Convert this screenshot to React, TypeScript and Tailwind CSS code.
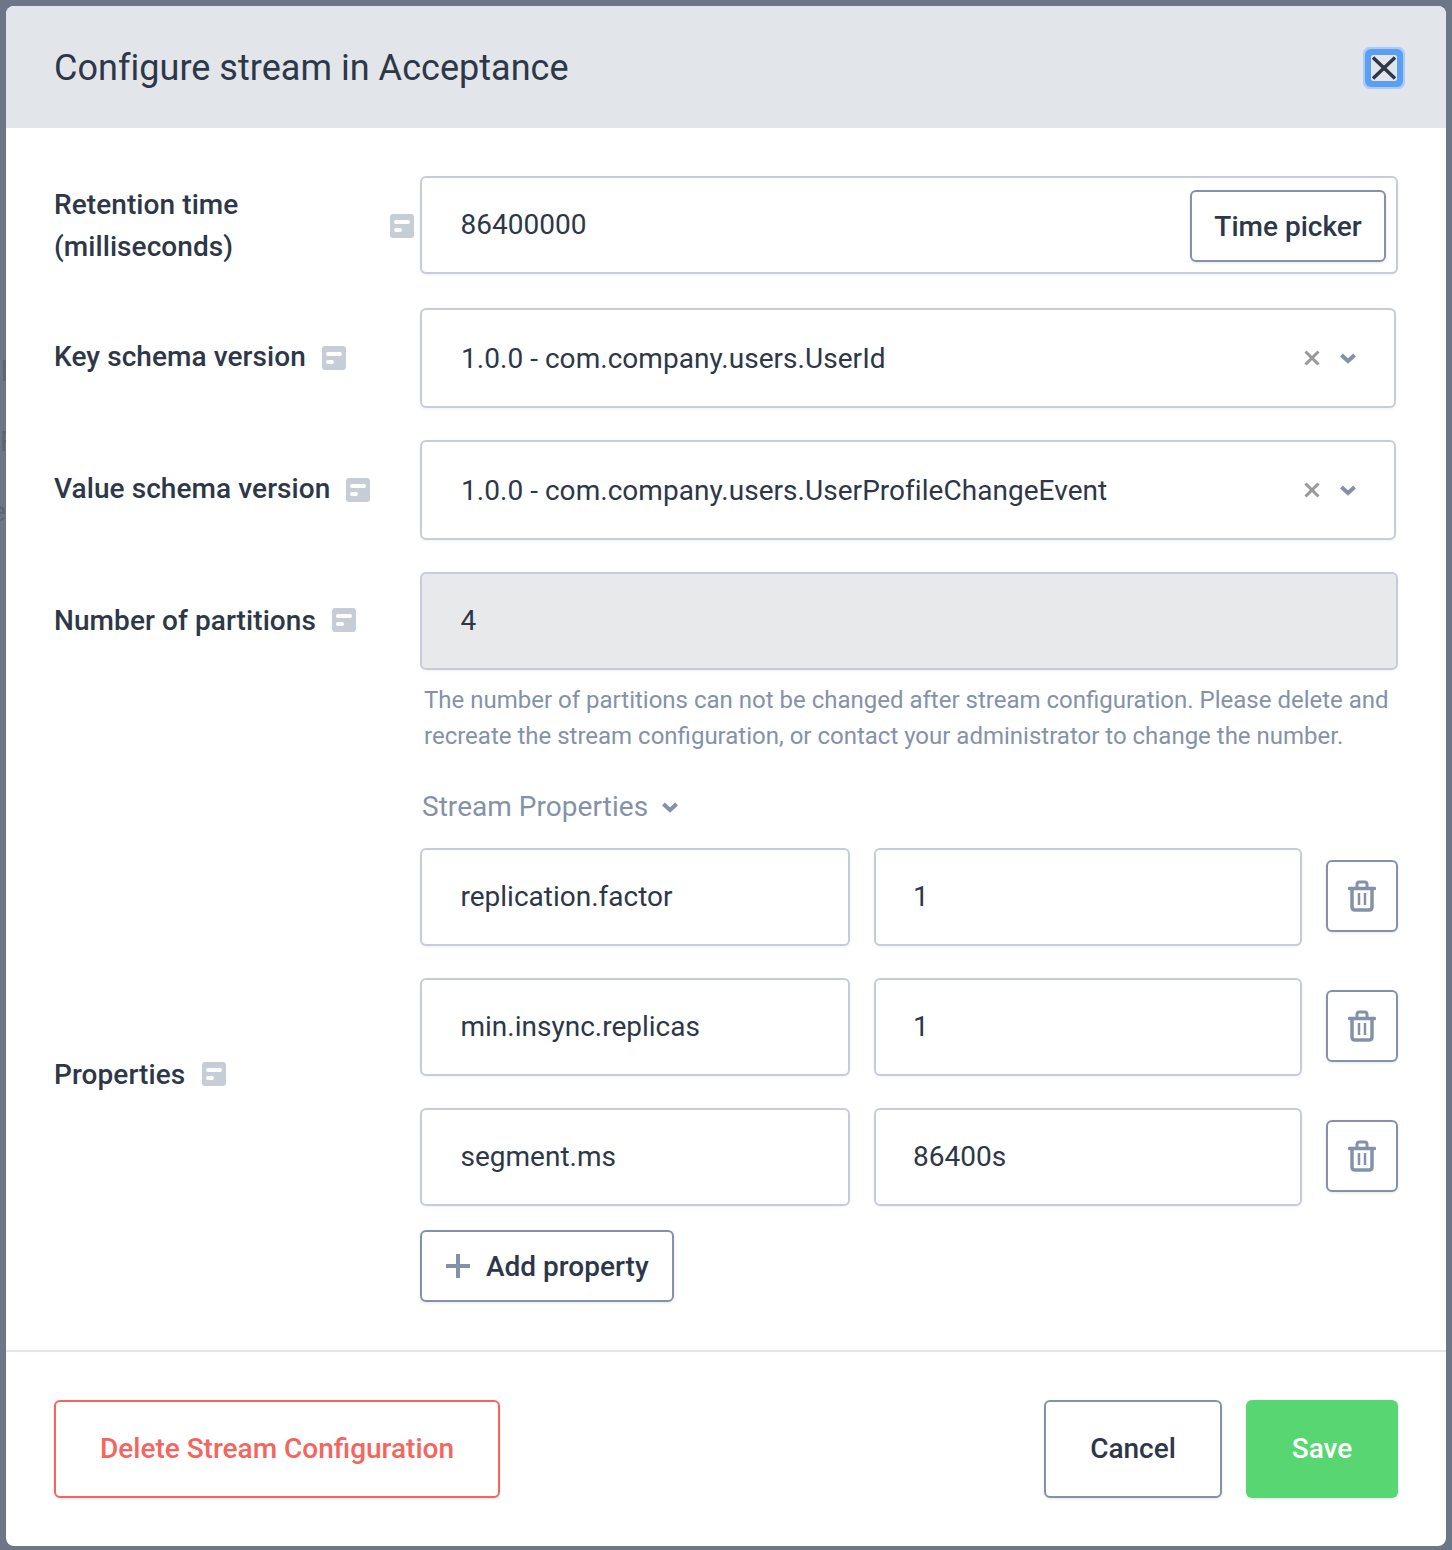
const NoteIcon = () => (
  <svg width="24" height="24" viewBox="0 0 24 24" className="shrink-0">
    <rect width="24" height="24" rx="3" fill="#c6cdd6" />
    <rect x="4" y="6" width="16" height="4" rx="2" fill="#fff" />
    <rect x="4" y="14" width="8" height="4" rx="2" fill="#fff" />
  </svg>
);

const TrashIcon = () => (
  <svg width="28" height="32" viewBox="0 0 28 32" fill="none" stroke="#8492a9" strokeWidth="3.500">
    <path d="M1.500 8.500h25" strokeLinecap="round" />
    <path d="M9 8V4.500Q9 2 11.500 2h5Q19 2 19 4.500V8" strokeWidth="3" />
    <path d="M4 9v18Q4 30 7 30h14q3 0 3-3V9" />
    <path d="M11 13v12M17 13v12" strokeWidth="2.500" />
  </svg>
);

const Chevron = () => (
  <svg width="16" height="11" viewBox="0 0 16 11" fill="none" stroke="#8492a9" strokeWidth="4">
    <path d="M1.400 2l6.600 6L14.600 2" />
  </svg>
);

type LabelProps = { text: string; className?: string; textClass?: string; iconClass?: string };

const FieldLabel = ({ text, className = '', textClass = '', iconClass = 'ml-4' }: LabelProps) => (
  <div className={`flex w-[366px] shrink-0 items-center ${className}`}>
    <span className={`max-w-[320px] text-[28px] leading-[42px] font-medium tracking-[0.08px] text-[#2d3748] ${textClass}`}>{text}</span>
    <span className={iconClass}>
      <NoteIcon />
    </span>
  </div>
);

const TextInput = ({ value, className = '' }: { value: string; className?: string }) => (
  <input
    readOnly
    value={value}
    className={`h-[98px] rounded-md border-2 border-[#c6ccd9] bg-white pb-[2px] text-[28px] text-[#2d3748] shadow-[0_1px_3px_rgba(0,0,0,0.06)] outline-none ${className}`}
  />
);

const SelectBox = ({ value }: { value: string }) => (
  <div className="flex h-[100px] flex-1 items-center rounded-md border-2 border-[#c6ccd9] bg-white pr-[38px] pl-[39px] shadow-[0_1px_3px_rgba(0,0,0,0.06)]">
    <span className="flex-1 pt-[2px] text-[28px] tracking-[0.04px] text-[#2d3748]">{value}</span>
    <svg width="16" height="16" viewBox="0 0 16 16" fill="none" stroke="#999999" strokeWidth="3">
      <path d="M1.500 1.500l13 13M14.500 1.500l-13 13" />
    </svg>
    <span className="ml-5">
      <Chevron />
    </span>
  </div>
);

const PropertyRow = ({ name, value }: { name: string; value: string }) => (
  <div className="flex items-center gap-6">
    <TextInput value={name} className="w-[430px] px-[38.5px]" />
    <TextInput value={value} className="w-[428px] px-[37px]" />
    <button className="mb-[2px] flex h-[72px] w-[72px] items-center justify-center rounded-md border-2 border-[#8492a9] bg-white shadow-[0_1px_3px_rgba(0,0,0,0.1)]">
      <TrashIcon />
    </button>
  </div>
);

const App = () => {
  return (
    <div className="relative h-[1550px] overflow-hidden bg-[#6c7686] p-[6px] font-['Roboto',sans-serif]">
      {/* page behind the modal */}
      <span className="absolute top-[358px] left-[1px] text-[28px] leading-none text-[#5b6577]">l</span>
      <span className="absolute top-[428px] left-[0px] text-[28px] leading-none text-[#5b6577]">F</span>
      <span className="absolute top-[498px] left-[-9px] text-[28px] leading-none text-[#5b6577]">e</span>

      <div className="relative h-[1540px] overflow-hidden rounded-lg bg-white">
        {/* Header */}
        <div className="flex h-[122px] items-center justify-between bg-[#e2e5ea] px-[48px]">
          <h1 className="pt-[2px] text-[36px] font-normal tracking-[0.03px] text-[#2d3748]">Configure stream in Acceptance</h1>
          <button className="mt-[1px] mr-[1px] flex h-[26px] w-[26px] items-center justify-center rounded-[2px] shadow-[0_0_0_6px_#5b9ff2,0_0_0_8px_#a9cbf5]">
            <svg width="26" height="26" viewBox="0 0 26 26" fill="none" stroke="#2d3748" strokeWidth="3.500">
              <path d="M2 2.500l22 21M24 2.500l-22 21" />
            </svg>
          </button>
        </div>

        {/* Body */}
        <div className="px-[48px] pt-[48px]">
          <div className="flex items-center">
            <FieldLabel text="Retention time (milliseconds)" className="pt-[2px]" />
            <div className="relative flex-1">
              <TextInput value="86400000" className="w-full px-[38.5px]" />
              <button className="absolute top-[14px] right-3 h-[72px] w-[196px] rounded-md border-2 border-[#8492a9] bg-white pt-[2px] text-[28px] font-medium text-[#2d3748] shadow-[0_1px_3px_rgba(0,0,0,0.1)]">
                Time picker
              </button>
            </div>
          </div>

          <div className="mt-[34px] flex items-center pr-[2px]">
            <FieldLabel text="Key schema version" textClass="pb-[2px]" />
            <SelectBox value="1.0.0 - com.company.users.UserId" />
          </div>

          <div className="mt-8 flex items-center pr-[2px]">
            <FieldLabel text="Value schema version" textClass="pb-[2px]" />
            <SelectBox value="1.0.0 - com.company.users.UserProfileChangeEvent" />
          </div>

          <div className="mt-8 flex items-center">
            <FieldLabel text="Number of partitions" iconClass="mb-[2px] ml-4" />
            <TextInput value="4" className="flex-1 !bg-[#e8e9eb] px-[38.5px]" />
          </div>

          <p className="mt-3 ml-[370px] text-[24px] leading-[36px] text-[#8492a9]">
            The number of partitions can not be changed after stream configuration. Please delete and recreate the stream configuration, or contact your administrator to change the number.
          </p>

          <div className="mt-[35px] ml-[368px] flex items-center text-[28px] leading-[36px] tracking-[0.04px] text-[#8492a9]">
            Stream Properties
            <span className="ml-[14px]">
              <Chevron />
            </span>
          </div>

          <div className="mt-[23px] flex items-center">
            <FieldLabel text="Properties" iconClass="mb-[2px] ml-[17px]" />
            <div className="flex-1">
              <div className="flex flex-col gap-8">
                <PropertyRow name="replication.factor" value="1" />
                <PropertyRow name="min.insync.replicas" value="1" />
                <PropertyRow name="segment.ms" value="86400s" />
              </div>
              <button className="mt-6 flex h-[72px] w-[254px] items-center rounded-md border-2 border-[#8492a9] bg-white pl-6 text-[28px] font-medium text-[#2d3748] shadow-[0_1px_3px_rgba(0,0,0,0.1)]">
                <svg width="24" height="24" viewBox="0 0 24 24" stroke="#8492a9" strokeWidth="4">
                  <path d="M12 0v24M0 12h24" />
                </svg>
                <span className="ml-4 pt-[2px]">Add property</span>
              </button>
            </div>
          </div>
        </div>

        {/* Footer */}
        <div className="mt-12 flex justify-between border-t-2 border-[#e2e5ec] px-[48px] pt-12">
          <button className="h-[98px] w-[446px] rounded-md border-2 border-[#f5655d] bg-white text-[28px] font-medium text-[#f5655d] shadow-[0_1px_3px_rgba(0,0,0,0.1)]">
            Delete Stream Configuration
          </button>
          <div className="flex gap-6">
            <button className="h-[98px] w-[178px] rounded-md border-2 border-[#8492a9] bg-white text-[28px] font-medium text-[#2d3748] shadow-[0_1px_3px_rgba(0,0,0,0.1)]">
              Cancel
            </button>
            <button className="h-[98px] w-[152px] rounded-md bg-[#58d672] text-[28px] font-medium text-white shadow-[0_1px_3px_rgba(0,0,0,0.1)]">
              Save
            </button>
          </div>
        </div>
      </div>
    </div>
  );
};

export default App;
